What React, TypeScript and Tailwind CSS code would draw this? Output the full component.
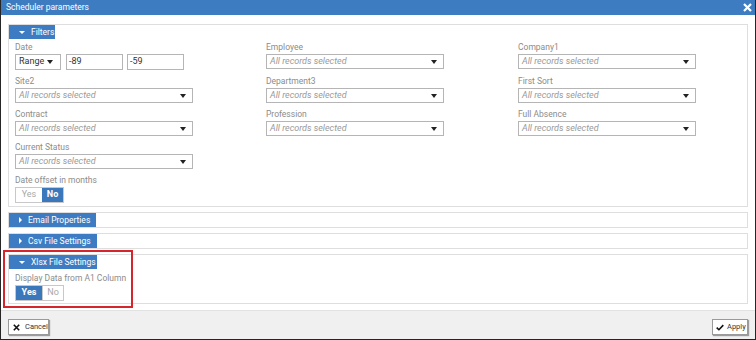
import React from 'react';

const font = "font-['Roboto','Liberation_Sans',Arial,sans-serif]";

function Caret() {
  return <span className="w-0 h-0 border-x-[3px] border-x-transparent border-t-[4px] border-t-[#222]" />;
}

function Select({ value, placeholder = true, className = 'w-[178px]' }: { value: string; placeholder?: boolean; className?: string }) {
  return (
    <div className={`${className} h-[15px] border border-[#b5b5b5] bg-white flex items-center justify-between pl-[3px] pr-[6px]`}>
      <span className={placeholder ? 'italic text-[#9a9a9a] text-[9px] leading-none' : 'text-[#333] text-[9px] leading-none'}>{value}</span>
      <Caret />
    </div>
  );
}

function Field({ label, children }: { label: string; children: React.ReactNode }) {
  return (
    <div className="flex flex-col">
      <div className="h-[13px] text-[8.5px] leading-[13px] text-[#8c8c8c]">{label}</div>
      {children}
    </div>
  );
}

function Toggle({ yes }: { yes: boolean }) {
  return (
    <div className="flex h-[16px] w-[49px] border border-[#c8c8c8] text-[9px]">
      <div className={`w-[26px] flex items-center justify-center ${yes ? 'bg-[#3b77bb] text-white font-bold' : 'bg-white text-[#a8a8a8]'}`}>Yes</div>
      <div className={`flex-1 flex items-center justify-center ${!yes ? 'bg-[#3b77bb] text-white font-bold' : 'bg-white text-[#a8a8a8] border-l border-[#c8c8c8]'}`}>No</div>
    </div>
  );
}

function Tab({ title, open, width }: { title: string; open: boolean; width: string }) {
  return (
    <div className={`${width} h-[14px] bg-[#3d7cc2] text-white text-[8.5px] flex items-center pl-[10px] gap-[6px] whitespace-nowrap`}>
      {open ? (
        <span className="w-0 h-0 border-x-[3px] border-x-transparent border-t-[3px] border-t-white" />
      ) : (
        <span className="w-0 h-0 border-y-[3px] border-y-transparent border-l-[3px] border-l-white" />
      )}
      <span className="leading-none">{title}</span>
    </div>
  );
}

export default function App() {
  return (
    <div className={`w-[756px] h-[340px] relative overflow-hidden bg-white flex flex-col border-x border-b border-[#262626] ${font}`}>
      {/* title bar */}
      <div className="h-[15px] bg-[#3e7cc2] flex items-center justify-between pl-[5px] pr-[3px] shrink-0">
        <span className="text-white text-[8.5px] leading-none">Scheduler parameters</span>
        <svg width="9" height="9" viewBox="0 0 9 9">
          <path d="M1 1 L8 8 M8 1 L1 8" stroke="#fff" strokeWidth="2.2" />
        </svg>
      </div>

      <div className="flex-1 px-[7px] pt-[9px] flex flex-col gap-[5px]">
        {/* Filters */}
        <div className="border border-[#dedede]">
          <Tab title="Filters" open width="w-[46px]" />
          <div className="pl-[6px] pt-[2px] pb-[3px] grid grid-cols-[251px_252px_178px] gap-y-[5px]">
            <Field label="Date">
              <div className="flex h-[16px]">
                <div className="w-[46px] h-[16px] border border-[#b5b5b5] flex items-center justify-between pl-[3px] pr-[7px] text-[9px] text-[#333]">
                  Range <Caret />
                </div>
                <div className="ml-[5px] w-[57px] h-[16px] border border-[#b5b5b5] text-[9px] text-[#333] flex items-center pl-[2px]">-89</div>
                <div className="ml-[4px] w-[57px] h-[16px] border border-[#b5b5b5] text-[9px] text-[#333] flex items-center pl-[2px]">-59</div>
              </div>
            </Field>
            <Field label="Employee"><Select value="All records selected" /></Field>
            <Field label="Company1"><Select value="All records selected" /></Field>

            <Field label="Site2"><Select value="All records selected" /></Field>
            <Field label="Department3"><Select value="All records selected" /></Field>
            <Field label="First Sort"><Select value="All records selected" /></Field>

            <Field label="Contract"><Select value="All records selected" /></Field>
            <Field label="Profession"><Select value="All records selected" /></Field>
            <Field label="Full Absence"><Select value="All records selected" /></Field>

            <div className="col-span-3">
              <Field label="Current Status"><Select value="All records selected" /></Field>
            </div>
            <div className="col-span-3">
              <Field label="Date offset in months"><Toggle yes={false} /></Field>
            </div>
          </div>
        </div>

        {/* Email Properties */}
        <div className="border border-[#dedede]">
          <Tab title="Email Properties" open={false} width="w-[87px]" />
        </div>

        {/* Csv */}
        <div className="border border-[#dedede]">
          <Tab title="Csv File Settings" open={false} width="w-[88px]" />
        </div>

        {/* Xlsx */}
        <div className="border border-[#dedede]">
          <Tab title="Xlsx File Settings" open width="w-[88px]" />
          <div className="pl-[6px] pt-[3px] pb-[2px]">
            <Field label="Display Data from A1 Column"><Toggle yes /></Field>
          </div>
        </div>
      </div>

      {/* footer */}
      <div className="h-[29px] shrink-0 bg-[#f0f0f0] border-t border-[#e2e2e2] flex items-start justify-between px-[7px] pt-[8px]">
        <button className="h-[16px] w-[41px] bg-white border border-[#9a9a9a] shadow-[1px_1px_1px_rgba(0,0,0,0.35)] flex items-center gap-[5px] pl-[4px] text-[7.5px] text-[#333]">
          <svg width="7" height="7" viewBox="0 0 7 7">
            <path d="M0.8 0.8 L6.2 6.2 M6.2 0.8 L0.8 6.2" stroke="#111" strokeWidth="1.6" />
          </svg>
          Cancel
        </button>
        <button className="h-[16px] w-[36px] bg-white border border-[#9a9a9a] shadow-[1px_1px_1px_rgba(0,0,0,0.35)] flex items-center gap-[3px] pl-[3px] text-[7.5px] text-[#333]">
          <svg width="8" height="7" viewBox="0 0 9 7">
            <path d="M0.8 3.6 L3.3 6 L8.2 0.8" stroke="#111" strokeWidth="1.8" fill="none" />
          </svg>
          Apply
        </button>
      </div>

      {/* annotation highlight */}
      <div className="absolute left-[2px] top-[250px] w-[130px] h-[58px] border-2 border-[#d4262c]" />
    </div>
  );
}
